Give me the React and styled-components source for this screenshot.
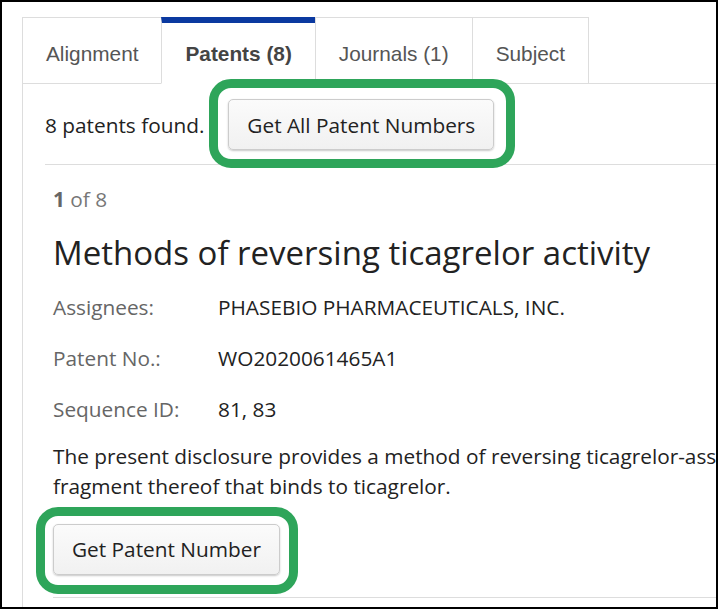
import styled, { createGlobalStyle } from 'styled-components'

const GlobalStyle = createGlobalStyle`
  html, body {
    margin: 0;
    padding: 0;
    background: #fff;
  }
  * {
    box-sizing: border-box;
  }
`

const Frame = styled.div`
  width: 718px;
  height: 609px;
  border: 2px solid #000;
  overflow: hidden;
  padding: 15px 0 0 20px;
  background: #fff;
  font-family: 'Open Sans', 'Liberation Sans', sans-serif;
  font-size: 20.8px;
  color: #222;
`

const TabList = styled.div`
  display: flex;
  border-bottom: 1px solid #ddd;
`

const Tab = styled.div`
  height: 67px;
  margin-bottom: -1px;
  margin-left: -1px;
  padding: ${(p) => (p.$active ? '2px 23px 0' : '7px 23px 0')};
  display: flex;
  align-items: center;
  border: 1px solid #ddd;
  border-top: ${(p) => (p.$active ? '6px solid #0a39a0' : '1px solid #ddd')};
  border-bottom-color: ${(p) => (p.$active ? '#fff' : '#ddd')};
  background: #fff;
  font-family: 'Liberation Sans', Arial, sans-serif;
  font-size: 20.8px;
  font-weight: ${(p) => (p.$active ? 700 : 400)};
  color: ${(p) => (p.$active ? '#444' : '#555')};
  white-space: nowrap;

  &:first-child {
    margin-left: 0;
  }
`

const Panel = styled.div`
  border-left: 1px solid #ddd;
  padding-left: 22px;
  height: 100%;
`

const Summary = styled.div`
  display: flex;
  align-items: center;
  gap: 24px;
  padding: 15px 0 14px;
  border-bottom: 1px solid #ddd;
  white-space: nowrap;
`

const Highlight = styled.div`
  position: relative;
  display: inline-flex;

  &::after {
    content: '';
    position: absolute;
    top: ${(p) => p.$top}px;
    right: ${(p) => p.$right}px;
    bottom: ${(p) => p.$bottom}px;
    left: ${(p) => p.$left}px;
    border: 9px solid #2ea55a;
    border-radius: 22px;
    pointer-events: none;
    z-index: 1;
  }
`

const Button = styled.button`
  height: 51px;
  padding: 0 18px;
  border: 1px solid #ccc;
  border-radius: 5px;
  background: linear-gradient(#fbfbfb, #f1f1f1);
  box-shadow: 0 1px 2px rgba(0, 0, 0, 0.22);
  font-family: 'Open Sans', sans-serif;
  font-size: 20.8px;
  color: #222;
  white-space: nowrap;
  cursor: pointer;
`

const Item = styled.div`
  margin-left: 8px;
  padding: 19px 0 22px;
  border-bottom: 1px solid #ddd;
`

const Counter = styled.div`
  line-height: 30px;
  color: #777;

  b {
    color: #666;
    font-weight: 700;
  }
`

const Title = styled.h2`
  margin: 19px 0 0;
  font-size: 33px;
  font-weight: 400;
  line-height: 1.2;
  color: #222;
  white-space: nowrap;
`

const Fields = styled.dl`
  margin: 19px 0 0;
  display: grid;
  grid-template-columns: 165px auto;
  row-gap: 21px;
  line-height: 30px;
`

const Label = styled.dt`
  color: #666;
`

const Value = styled.dd`
  margin: 0;
  color: #222;
  white-space: nowrap;
`

const Description = styled.p`
  margin: 17px 0 23px;
  line-height: 30px;
  color: #222;
  white-space: nowrap;
`

const fields = [
  ['Assignees:', 'PHASEBIO PHARMACEUTICALS, INC.'],
  ['Patent No.:', 'WO2020061465A1'],
  ['Sequence ID:', '81, 83'],
]

const tabs = [
  { label: 'Alignment' },
  { label: 'Patents (8)', active: true },
  { label: 'Journals (1)' },
  { label: 'Subject' },
]

export default function App() {
  return (
    <>
      <GlobalStyle />
      <Frame>
        <TabList>
          {tabs.map((t) => (
            <Tab key={t.label} $active={t.active}>
              {t.label}
            </Tab>
          ))}
        </TabList>
        <Panel>
          <Summary>
            <span>8 patents found.</span>
            <Highlight $top={-20} $right={-21} $bottom={-18} $left={-19}>
              <Button>Get All Patent Numbers</Button>
            </Highlight>
          </Summary>
          <Item>
            <Counter>
              <b>1</b> of 8
            </Counter>
            <Title>Methods of reversing ticagrelor activity</Title>
            <Fields>
              {fields.map(([label, value]) => [
                <Label key={label}>{label}</Label>,
                <Value key={label + 'v'}>{value}</Value>,
              ])}
            </Fields>
            <Description>
              The present disclosure provides a method of reversing ticagrelor-associated activity with an antibody or antigen-binding
              <br />
              fragment thereof that binds to ticagrelor.
            </Description>
            <Highlight $top={-17} $right={-18} $bottom={-19} $left={-17}>
              <Button>Get Patent Number</Button>
            </Highlight>
          </Item>
        </Panel>
      </Frame>
    </>
  )
}
